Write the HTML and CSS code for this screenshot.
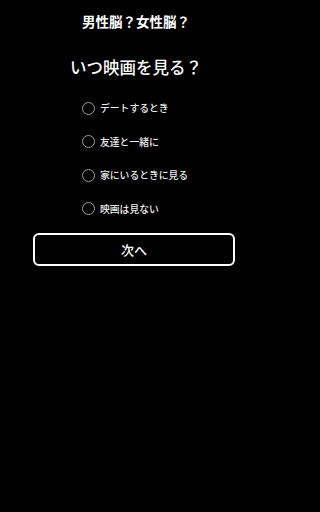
FILE: index.html
```html
<!DOCTYPE html>
<html lang="ja">
<head>
<meta charset="utf-8">
<link rel="stylesheet" href="styles.css">
</head>
<body>
<div class="page">
  <h1 class="title">男性脳？女性脳？</h1>
  <h2 class="question">いつ映画を見る？</h2>
  <ul class="options">
    <li class="option"><span class="radio"></span><span class="label">デートするとき</span></li>
    <li class="option"><span class="radio"></span><span class="label">友達と一緒に</span></li>
    <li class="option"><span class="radio"></span><span class="label">家にいるときに見る</span></li>
    <li class="option"><span class="radio"></span><span class="label">映画は見ない</span></li>
  </ul>
  <div class="next">次へ</div>
</div>
</body>
</html>
```

FILE: styles.css
```css
html, body {
  margin: 0;
  padding: 0;
  background: #000;
  color: #fff;
  font-family: "Noto Sans CJK JP", "Noto Sans", sans-serif;
}
.page {
  width: 272px;
  height: 512px;
  display: flex;
  flex-direction: column;
  align-items: center;
}
.title {
  margin: 12px 0 0;
  font-size: 13.5px;
  line-height: 18px;
  font-weight: 700;
}
.question {
  margin: 26px 0 0;
  font-size: 16.5px;
  line-height: 22px;
  font-weight: 500;
}
.options {
  list-style: none;
  margin: 23px 0 0;
  padding: 0 0 0 82px;
  align-self: stretch;
  display: flex;
  flex-direction: column;
  gap: 19.6px;
}
.option {
  display: flex;
  align-items: center;
  height: 14px;
}
.radio {
  width: 11px;
  height: 11px;
  border: 1.5px solid #a0a0a0;
  border-radius: 50%;
  flex: none;
}
.label {
  margin-left: 5px;
  font-size: 9.8px;
  font-weight: 500;
  color: #ececec;
}
.next {
  margin-top: 17px;
  align-self: flex-start;
  margin-left: 33px;
  width: 198px;
  height: 29px;
  border: 2px solid #fff;
  border-radius: 6px;
  display: flex;
  align-items: center;
  justify-content: center;
  font-size: 13px;
  font-weight: 500;
}
```
